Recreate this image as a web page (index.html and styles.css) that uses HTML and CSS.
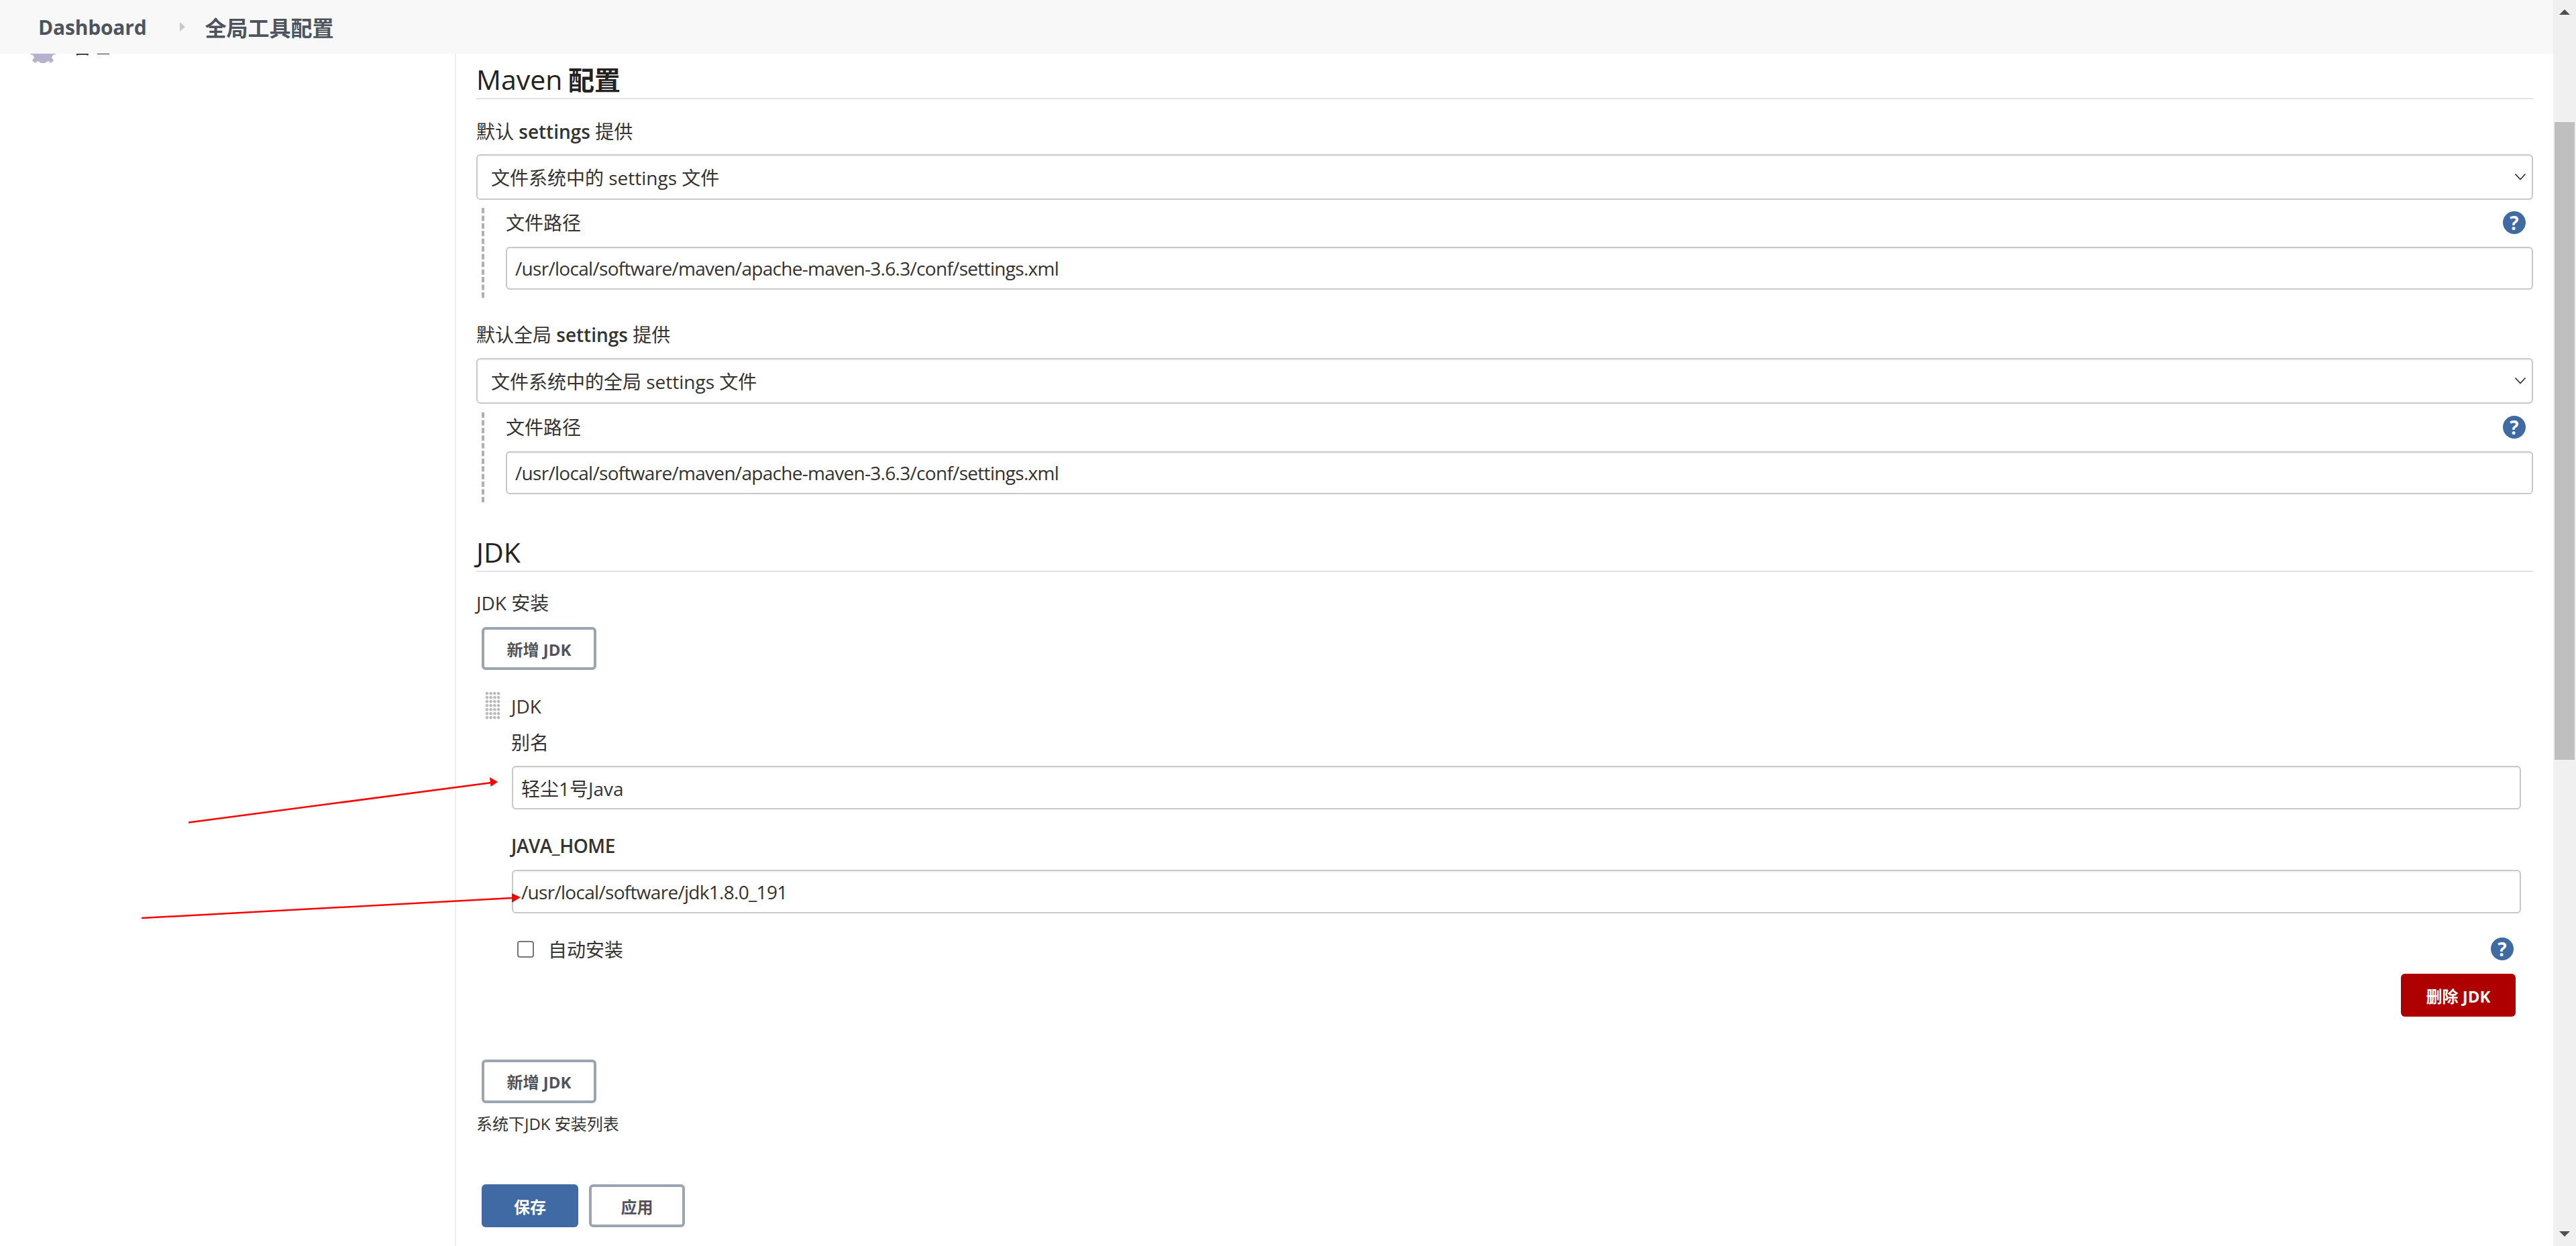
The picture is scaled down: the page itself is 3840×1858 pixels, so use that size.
FILE: index.html
```html
<!DOCTYPE html>
<html lang="zh-CN">
<head>
<meta charset="utf-8">
<title>全局工具配置</title>
<link rel="stylesheet" href="styles.css">
</head>
<body>
<div class="app">
  <div class="page">
    <header class="topbar">
      <a class="crumb">Dashboard</a>
      <span class="crumb-sep"></span>
      <a class="crumb crumb-current">全局工具配置</a>
    </header>
    <div class="columns">
      <aside class="sidebar">
        <div class="side-item">
          <svg class="gear" viewBox="0 0 38 38"><path d="M16 1h6l1 5 4 2 4-3 4 5-3 4 2 4 4 1v6l-4 1-2 4 3 4-4 4-4-3-4 2-1 5h-6l-1-5-4-2-4 3-4-4 3-4-2-4-4-1v-6l4-1 2-4-3-4 4-5 4 3 4-2z" fill="#b4b2cc"/></svg>
          <span class="side-text">管理</span>
        </div>
      </aside>
      <main class="content">
        <h2 class="section-title">Maven <b>配置</b></h2>
        <div class="field">
          <label class="label">默认 <b>settings</b> 提供</label>
          <div class="select-wrap">
            <select class="control select"><option>文件系统中的 settings 文件</option></select>
            <svg class="chevron" viewBox="0 0 18 12"><path d="M1.5 1.5 9 9.5l7.5-8" fill="none" stroke="#333" stroke-width="1.8"/></svg>
          </div>
          <div class="nested">
            <div class="label-row">
              <label class="label">文件路径</label>
              <span class="help">?</span>
            </div>
            <input class="control latin" value="/usr/local/software/maven/apache-maven-3.6.3/conf/settings.xml">
          </div>
        </div>
        <div class="field">
          <label class="label">默认全局 <b>settings</b> 提供</label>
          <div class="select-wrap">
            <select class="control select"><option>文件系统中的全局 settings 文件</option></select>
            <svg class="chevron" viewBox="0 0 18 12"><path d="M1.5 1.5 9 9.5l7.5-8" fill="none" stroke="#333" stroke-width="1.8"/></svg>
          </div>
          <div class="nested">
            <div class="label-row">
              <label class="label">文件路径</label>
              <span class="help">?</span>
            </div>
            <input class="control latin" value="/usr/local/software/maven/apache-maven-3.6.3/conf/settings.xml">
          </div>
        </div>
        <h2 class="section-title section-jdk">JDK</h2>
        <label class="label label-install">JDK 安装</label>
        <button class="btn btn-outline btn-add">新增 JDK</button>
        <div class="repeat-head">
          <span class="grip"></span>
          <span class="repeat-name">JDK</span>
        </div>
        <div class="repeat-body">
          <label class="label">别名</label>
          <input class="control control-alias" value="轻尘1号Java">
          <label class="label label-home">JAVA_HOME</label>
          <input class="control control-home latin" value="/usr/local/software/jdk1.8.0_191">
          <div class="check-row">
            <input type="checkbox" class="check" id="auto">
            <label class="check-label" for="auto">自动安装</label>
            <span class="help">?</span>
          </div>
          <div class="delete-row"><button class="btn btn-danger">删除 JDK</button></div>
        </div>
        <button class="btn btn-outline btn-add-2">新增 JDK</button>
        <p class="caption">系统下JDK 安装列表</p>
        <div class="actions">
          <button class="btn btn-primary">保存</button>
          <button class="btn btn-outline btn-apply">应用</button>
        </div>
      </main>
    </div>
    <svg class="annotations" viewBox="0 0 3806 1858" width="3806" height="1858">
      <path d="M281 1226.5 733 1167" stroke="#f00" stroke-width="2.5" fill="none"/>
      <path d="M742 1166 730 1159l1.500 14z" fill="#f00"/>
      <path d="M211 1369 765 1339" stroke="#f00" stroke-width="2.5" fill="none"/>
      <path d="M776 1338 763 1332v14z" fill="#f00"/>
    </svg>
  </div>
  <div class="scrollbar">
    <span class="arrow-up"></span>
    <span class="thumb"></span>
    <span class="arrow-down"></span>
  </div>
</div>
</body>
</html>
```

FILE: styles.css
```css
* { box-sizing: border-box; }
html, body { margin: 0; height: 100%; overflow: hidden; background: #fff; }
body {
  font-family: "Open Sans", "Noto Sans CJK SC", sans-serif;
  font-size: 28px;
  color: #333;
}
.app { display: flex; height: 1858px; }
.page { flex: 1; position: relative; overflow: hidden; }

.topbar {
  position: relative;
  z-index: 2;
  height: 80px;
  background: #f8f8f8;
  display: flex;
  align-items: center;
  padding-left: 57px;
  color: #4d545d;
  font-weight: 700;
  font-size: 30px;
}
.crumb { letter-spacing: -0.2px; }
.crumb-sep {
  width: 0; height: 0;
  margin: 0 32px 0 50px;
  border-left: 8px solid #c8c8c8;
  border-top: 7px solid transparent;
  border-bottom: 7px solid transparent;
}
.crumb-current { font-size: 32px; letter-spacing: 0; margin-left: -3px; }

.columns { display: flex; height: 1778px; }
.sidebar { width: 680px; flex: none; border-right: 2px solid #eee; padding-left: 45px; overflow: hidden; }
.side-item { display: flex; align-items: center; gap: 25px; height: 38px; margin-top: -24px; }
.side-text { position: relative; top: -7px; }
.gear { width: 38px; height: 38px; }

.content { flex: 1; min-width: 0; padding: 10px 30px 0 30px; }

.section-title {
  margin: 0 0 28px;
  height: 58px;
  line-height: 56px;
  font-size: 41px;
  font-weight: 500;
  color: #222;
  border-bottom: 2px solid #e2e2e2;
}
.section-title b { font-weight: 700; font-size: 39px; margin-left: -2px; }
.section-jdk { margin-top: 46px; }

.label { display: block; height: 40px; line-height: 40px; font-size: 28px; }
.label b { font-weight: 600; }
.field { margin-bottom: 35px; }
.field:last-of-type { margin-bottom: 0; }
.field > .label { margin-bottom: 14px; }
.field + .field > .label { margin-bottom: 15px; }
.field + .field .nested { margin-top: 13px; }

.control {
  display: block;
  width: 100%;
  height: 64px;
  border: 2px solid #c8c8c8;
  border-radius: 6px;
  background: #fff;
  box-shadow: inset 0 2px 2px rgba(0,0,0,.04);
  padding: 0 12px;
  font: inherit;
  color: #333;
  outline: none;
}
.latin { letter-spacing: -0.7px; }
.select-wrap { position: relative; }
.select { height: 68px; padding: 2px 20px 0; appearance: none; -webkit-appearance: none; }
.chevron { position: absolute; right: 10px; top: 28px; width: 18px; height: 12px; }

.nested {
  margin: 12px 0 0 8px;
  padding: 2px 0 12px 32px;
  border-left: 4px dashed #b0b0b0;
}
.label-row { display: flex; justify-content: space-between; align-items: center; margin-bottom: 16px; }
.help {
  width: 34px; height: 34px;
  margin-right: 11px;
  border-radius: 50%;
  background: #3f6aa3;
  color: #fff;
  font-size: 28px;
  font-weight: 700;
  line-height: 34px;
  text-align: center;
  flex: none;
}

.label-install { margin: -2px 0 16px; }
.btn {
  display: block;
  height: 64px;
  border-radius: 6px;
  font: inherit;
  font-size: 24px;
  font-weight: 700;
  padding: 0;
}
.btn-outline { background: #fff; border: 4px solid #9aa5b1; color: #4d545d; }
.btn-add, .btn-add-2 { width: 171px; margin-left: 8px; }
.btn-add-2 { height: 65px; margin-top: 0; }
.btn-danger { width: 171px; background: #ae0000; border: 0; color: #fff; }
.btn-primary { width: 144px; background: #3f6aa3; border: 0; color: #fff; }
.btn-apply { width: 143px; }

.repeat-head { display: flex; align-items: center; gap: 16px; margin: 32px 0 0 13px; height: 42px; }
.grip {
  width: 23px; height: 42px;
  background-image: radial-gradient(circle, #b8b8b8 1.6px, rgba(255,255,255,0) 2.8px);
  background-size: 5.75px 6px;
}
.repeat-name { line-height: 42px; padding-top: 2px; }
.repeat-body { margin: 14px 18px 0 52px; }
.control-alias { height: 65px; margin: 15px 0 34px 1px; width: calc(100% - 1px); }
.label-home { font-weight: 600; color: #333; letter-spacing: -0.5px; }
.control-home { margin: 16px 0 33px 1px; width: calc(100% - 1px); height: 65px; }
.check-row { display: flex; align-items: center; height: 40px; }
.check {
  appearance: none; -webkit-appearance: none;
  width: 25px; height: 25px;
  margin: 0 21px 0 9px;
  border: 2px solid #767676;
  border-radius: 4px;
  background: #fff;
  flex: none;
}
.check-label { flex: 1; }
.delete-row { display: flex; justify-content: flex-end; margin: 17px 8px 64px 0; }

.caption { margin: 11px 0 0; height: 40px; line-height: 40px; font-size: 24px; }
.actions { display: flex; gap: 16px; margin: 70px 0 0 8px; }

.annotations { position: absolute; left: 0; top: 0; pointer-events: none; z-index: 1; }

.scrollbar { width: 34px; flex: none; background: #f0f0f0; display: flex; flex-direction: column; align-items: center; }
.arrow-up, .arrow-down {
  width: 0; height: 0; flex: none;
  border-left: 8px solid transparent;
  border-right: 8px solid transparent;
}
.arrow-up { margin-top: 14px; border-bottom: 8px solid #505050; }
.arrow-down { margin-top: auto; margin-bottom: 14px; border-top: 8px solid #505050; }
.thumb { width: 30px; height: 951px; margin-top: 160px; background: #bfbfbf; flex: none; }
```
